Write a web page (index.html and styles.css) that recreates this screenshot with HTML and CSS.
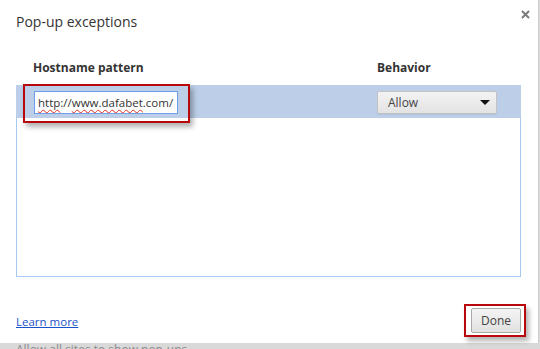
FILE: index.html
```html
<!DOCTYPE html>
<html lang="en">
<head>
    <meta charset="UTF-8">
    <title>Pop-up exceptions</title>
    <link rel="stylesheet" href="styles.css">
</head>
<body>
    <div class="dialog">
        <div class="dialog-head">
            <h1>Pop-up exceptions</h1>
            <button class="close" aria-label="Close">
                <svg width="9" height="9" viewBox="0 0 9 9"><path d="M1 1L8 8M8 1L1 8" stroke="#7b7b7b" stroke-width="2"/></svg>
            </button>
        </div>
        <div class="columns">
            <span class="col-host">Hostname pattern</span>
            <span class="col-behavior">Behavior</span>
        </div>
        <div class="list">
            <div class="row selected">
                <div class="host-cell">
                    <div class="host-input"><span class="typo">http</span>://<span class="typo">www.dafabet</span>.com/</div>
                    <span class="mark mark-input"></span>
                </div>
                <div class="behavior-cell">
                    <div class="select">
                        <span>Allow</span>
                        <span class="arrow"></span>
                    </div>
                </div>
            </div>
        </div>
        <div class="footer">
            <a href="#" class="learn">Learn more</a>
            <div class="done-wrap">
                <button class="done">Done</button>
                <span class="mark mark-done"></span>
            </div>
        </div>
    </div>
    <div class="behind">Allow all sites to show pop-ups</div>
</body>
</html>
```

FILE: styles.css
```css
body {
    margin: 0;
    background-color: #d9d9d9;
    font-family: 'Open Sans', 'Noto Sans', sans-serif;
    color: #333;
    overflow: hidden;
}
.dialog {
    width: 505px;
    height: 343px;
    padding: 0 17px 0 16px;
    background-color: #fff;
    border-right: 1px solid #cfcfcf;
    display: flex;
    flex-direction: column;
}
.dialog-head {
    display: flex;
    justify-content: space-between;
    height: 50px;
}
.dialog-head h1 {
    margin: 12px 0 0 0;
    font-size: 14px;
    font-weight: normal;
    color: #333;
}
.close {
    border: none;
    background: none;
    padding: 0;
    margin: 8px -10px 0 0;
    width: 12px;
    height: 12px;
    display: flex;
    align-items: center;
    justify-content: center;
}
.columns {
    display: flex;
    height: 35px;
    align-items: center;
    font-size: 12px;
    font-weight: bold;
    color: #333;
}
.col-host {
    width: 344px;
    padding-left: 17px;
}
.list {
    height: 190px;
    border: 1px solid #a7c8ef;
    border-top-color: #bccee8;
    background-color: #fff;
}
.row {
    display: flex;
    margin: -1px -1px 0 -1px;
    padding: 6px 0 0 0;
    box-sizing: border-box;
}
.row.selected {
    height: 33px;
    background-color: #bccee8;
}
.host-cell {
    position: relative;
    width: 361px;
    padding-left: 18px;
    box-sizing: border-box;
}
.host-input {
    width: 144px;
    height: 23px;
    box-sizing: border-box;
    border: 1px solid #6f9ee9;
    background-color: #fff;
    padding: 0 3px;
    font-size: 11.5px;
    line-height: 21px;
    color: #333;
    white-space: nowrap;
    overflow: hidden;
}
.typo {
    text-decoration: underline wavy #e0301e;
    text-decoration-skip-ink: none;
    text-decoration-thickness: 1px;
    text-underline-offset: 2px;
}
.mark {
    position: absolute;
    border: 2px solid #b8080c;
    box-shadow: 3px 4px 5px rgba(0, 0, 0, 0.3);
    pointer-events: none;
}
.mark-input {
    left: 7px;
    top: -7px;
    width: 163px;
    height: 35px;
}
.select {
    width: 120px;
    height: 23px;
    box-sizing: border-box;
    border: 1px solid #c3c3c3;
    border-radius: 2px;
    background: linear-gradient(#f3f3f3, #e3e3e3);
    display: flex;
    align-items: center;
    justify-content: space-between;
    padding: 0 6px 0 10px;
    font-size: 12px;
    color: #444;
    box-shadow: 0 1px 0 rgba(0, 0, 0, 0.06);
}
.arrow {
    width: 0;
    height: 0;
    border-left: 5px solid transparent;
    border-right: 5px solid transparent;
    border-top: 5px solid #111;
}
.footer {
    flex: 1;
    display: flex;
    justify-content: space-between;
    align-items: flex-start;
    padding-top: 31px;
}
.learn {
    margin-top: 6px;
    font-size: 11.5px;
    color: #1a53c9;
    text-decoration: underline;
}
.done-wrap {
    position: relative;
}
.done {
    width: 50px;
    height: 25px;
    border: 1px solid #a9a9a9;
    border-radius: 2px;
    background: linear-gradient(#f4f4f4, #e1e1e1);
    font-family: 'Open Sans', sans-serif;
    font-size: 12px;
    color: #444;
    padding: 0;
}
.mark-done {
    left: -7px;
    top: -4px;
    width: 58px;
    height: 29px;
}
.behind {
    height: 6px;
    padding-left: 16px;
    font-size: 12px;
    line-height: 14px;
    color: #8a8a8a;
    overflow: hidden;
}
```
